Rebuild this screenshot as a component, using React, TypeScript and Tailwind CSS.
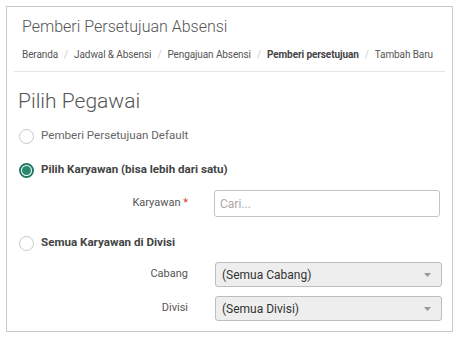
import React from 'react'

function Radio({ checked }: { checked?: boolean }) {
  return checked ? (
    <span className="flex h-[15px] w-[15px] shrink-0 items-center justify-center rounded-full border-2 border-[#1f7a62] bg-white">
      <span className="h-[9px] w-[9px] rounded-full bg-[#26896e]" />
    </span>
  ) : (
    <span className="h-[15px] w-[15px] shrink-0 rounded-full border border-[#c8c8c8] bg-white" />
  )
}

function Select({ value }: { value: string }) {
  return (
    <div className="flex h-[25px] w-[227px] items-center justify-between rounded-[3px] border border-[#bdbdbd] bg-[#eeeeee] pl-[6px] pr-[10px] text-[12px] text-[#333]">
      <span>{value}</span>
      <svg width="7" height="4" viewBox="0 0 7 4">
        <path d="M0 0h7L3.5 4z" fill="#999" />
      </svg>
    </div>
  )
}

export default function App() {
  const crumbs = ['Beranda', 'Jadwal & Absensi', 'Pengajuan Absensi', 'Pemberi persetujuan', 'Tambah Baru']
  return (
    <div className="h-[340px] w-[464px] bg-white p-[6px] font-['Roboto',sans-serif]">
      <div className="h-[326px] w-[447px] border border-[#c9c9c9] bg-white">
        {/* Header */}
        <div className="mx-[7px] border-b border-[#e5e5e5] px-[8px] pt-[10px] pb-[9px]">
          <h1 className="whitespace-nowrap text-[16px] font-light leading-[20px] text-[#555]">
            Pemberi Persetujuan Absensi
          </h1>
          <div className="mt-[11px] flex items-center whitespace-nowrap text-[10px] leading-[14px] tracking-[-0.1px] text-[#555]">
            {crumbs.map((c, i) => (
              <React.Fragment key={c}>
                {i > 0 && <span className="mx-[6px] text-[#ccc]">/</span>}
                <span className={i === 3 ? 'font-bold text-[#444]' : ''}>{c}</span>
              </React.Fragment>
            ))}
          </div>
        </div>

        {/* Body */}
        <div className="pl-[11px]">
          <h2 className="mt-[16px] text-[21px] font-light leading-[26px] text-[#555]">Pilih Pegawai</h2>

          <label className="mt-[14px] flex h-[16px] items-center gap-[7px] pl-[1px]">
            <Radio />
            <span className="text-[11.6px] text-[#666]">Pemberi Persetujuan Default</span>
          </label>

          <label className="mt-[18px] flex h-[16px] items-center gap-[7px] pl-[1px]">
            <Radio checked />
            <span className="text-[11.6px] font-bold text-[#444]">Pilih Karyawan (bisa lebih dari satu)</span>
          </label>

          <div className="mt-[12px] flex items-center">
            <span className="w-[170px] text-right text-[11px] text-[#555]">
              Karyawan <span className="text-[#e53935]">*</span>
            </span>
            <input
              placeholder="Cari..."
              className="ml-[26px] h-[27px] w-[226px] rounded-[3px] border border-[#c4c4c4] px-[5px] text-[12px] outline-none placeholder:text-[#aaa]"
            />
          </div>

          <label className="mt-[18px] flex h-[16px] items-center gap-[7px] pl-[1px]">
            <Radio />
            <span className="text-[11.6px] font-bold text-[#444]">Semua Karyawan di Divisi</span>
          </label>

          <div className="mt-[11px] flex items-center">
            <span className="w-[170px] text-right text-[11px] text-[#555]">Cabang</span>
            <div className="ml-[27px]">
              <Select value="(Semua Cabang)" />
            </div>
          </div>

          <div className="mt-[9px] flex items-center">
            <span className="w-[170px] text-right text-[11px] text-[#555]">Divisi</span>
            <div className="ml-[27px]">
              <Select value="(Semua Divisi)" />
            </div>
          </div>
        </div>
      </div>
    </div>
  )
}
